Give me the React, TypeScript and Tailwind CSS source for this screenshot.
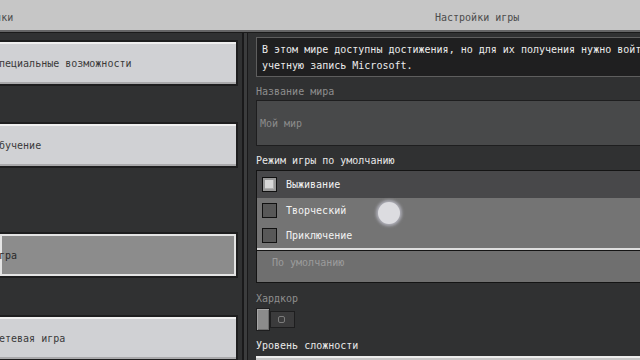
const font = "font-['DejaVu_Sans_Mono',monospace]";

function TabButton({ label, selected }: { label: string; selected?: boolean }) {
  return (
    <div
      className={`ml-[-2px] flex h-[46px] w-[240px] items-center overflow-hidden border-2 border-[#1e1e1f] pt-[1px] ${
        selected
          ? "bg-[#8c8c8c] text-[#2a2a2a] shadow-[inset_0_0_0_2px_#e4e4e4]"
          : "bg-[#d0d1d4] text-[#3a3a3a] shadow-[inset_0_2px_0_#efefef,inset_0_-2px_0_#a9a9ab]"
      }`}
    >
      <span className="ml-[-7px] whitespace-nowrap">{label}</span>
    </div>
  );
}

function ModeRow({ label, checked, dark }: { label: string; checked?: boolean; dark?: boolean }) {
  return (
    <div className={`flex items-center pl-[5px] ${dark ? "h-[27px] bg-[#48484a]" : "h-[25px] bg-[#747474]"}`}>
      <div
        className={`flex h-[15px] w-[15px] items-center justify-center border border-[#111] ${
          checked ? "bg-[#9a9a9a]" : "bg-[#585858]"
        }`}
      >
        {checked && <div className="h-[9px] w-[9px] bg-[#d8d8d8] shadow-[inset_-1px_-1px_0_#b0b0b0]" />}
      </div>
      <span className="ml-[9px] text-[#f2f2f2]">{label}</span>
    </div>
  );
}

export default function App() {
  return (
    <div className={`relative flex h-[360px] w-[640px] flex-col overflow-hidden bg-[#303132] text-[10px] leading-[14px] ${font}`}>
      {/* top bar */}
      <div className="flex h-[33px] shrink-0 border-b border-[#1a1a1a]">
        <div className="flex w-full border-b-2 border-[#656566] bg-[#c6c6c6] text-[#4c4c4c]">
          <div className="w-[248px] overflow-hidden pt-[11px]">
            <span className="ml-[-41px] whitespace-nowrap">Настройки</span>
          </div>
          <div className="pl-[187px] pt-[11px] whitespace-nowrap">Настройки игры</div>
        </div>
      </div>

      <div className="flex min-h-0 flex-1">
        {/* left tabs */}
        <div className="w-[242px] shrink-0 overflow-hidden pt-[7px]">
          <TabButton label="Специальные возможности" />
          <div className="mt-[36px]">
            <TabButton label="Обучение" />
          </div>
          <div className="mt-[64px]">
            <TabButton label="Игра" selected />
          </div>
          <div className="mt-[37px]">
            <TabButton label="Сетевая игра" />
          </div>
        </div>

        {/* divider */}
        <div className="w-[6px] shrink-0 border-l-2 border-r border-[#19191a] bg-[#3b3c3d]" />

        {/* right settings */}
        <div className="min-w-0 flex-1 overflow-hidden">
          <div className="w-[440px] pl-[8px] pt-[4px]">
            <div className="border border-[#5e5e5e] bg-[#1f1f20] px-[5px] pb-[2px] pt-[4px] leading-[16px] text-[#ececec]">
              <div className="whitespace-nowrap">В этом мире доступны достижения, но для их получения нужно войти в</div>
              <div className="whitespace-nowrap">учетную запись Microsoft.</div>
            </div>

            <div className="mt-[8px] text-[#8e8e8e]">Название мира</div>
            <div className="mt-[1px] flex h-[46px] items-center border border-[#1e1e1f] bg-[#48494a] pl-[3px] pt-[2px] text-[#8c8c8c]">
              Мой мир
            </div>

            <div className="mt-[8px] text-[#e8e8e8]">Режим игры по умолчанию</div>
            <div className="mt-[2px] border border-b-0 border-[#141414]">
              <ModeRow label="Выживание" checked dark />
              <ModeRow label="Творческий" />
              <ModeRow label="Приключение" />
              <div className="h-[2px] bg-[#dedede]" />
            </div>
            <div className="h-[33px] border border-[#141414] bg-[#6f6f6f] pl-[15px] pt-[5px] text-[#9c9c9c]">
              По умолчанию
            </div>

            <div className="mt-[9px] text-[#8e8e8e]">Хардкор</div>
            <div className="mt-[2px] flex h-[23px] items-center">
              <div className="h-[23px] w-[14px] border border-[#1e1e1f] bg-[#8b8b8b] shadow-[inset_1px_1px_0_#a6a6a6,inset_-1px_-1px_0_#6c6c6c]" />
              <div className="flex h-[17px] w-[25px] items-center justify-center border border-[#1e1e1f] bg-[#3b3b3c] pr-[3px]">
                <div className="h-[7px] w-[7px] rounded-[2px] border border-[#7c7c7c]" />
              </div>
            </div>

            <div className="mt-[8px] text-[#e8e8e8]">Уровень сложности</div>
            <div className="mt-[3px] h-[24px] border-t-2 border-[#ededed] bg-[#c6c6c6]" />
          </div>
        </div>
      </div>

      {/* pointer */}
      <div className="absolute left-[378px] top-[202px] h-[22px] w-[22px] rounded-full bg-[#dcdce0] shadow-[0_0_3px_2px_rgba(210,210,225,0.6)]" />
    </div>
  );
}
